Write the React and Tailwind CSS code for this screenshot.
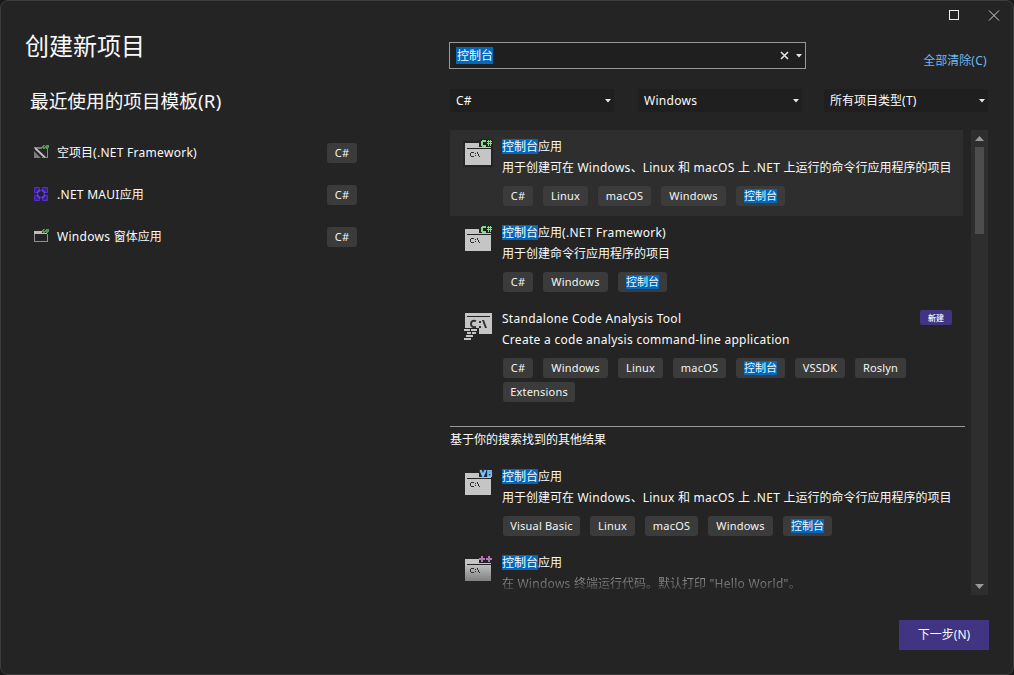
import React from "react";

const Mark = ({ children }) => <span className="bg-[#0069be] inline-block">{children}</span>;

// Latin runs are spaced slightly wider than the ideographs around them.
const Mixed = ({ text }) =>
  text.split(/([\x20-\x7e]+)/).map((part, i) =>
    i % 2 ? <span key={i} className="tracking-[0.28px]">{part}</span> : part
  );

function ConsoleIcon({ badge, fade }) {
  return (
    <svg width="30" height="30" viewBox="0 0 30 30" className="shrink-0 overflow-visible" shapeRendering="crispEdges">
      <defs>
        <linearGradient id="consoleFade" x1="0" y1="0" x2="0" y2="1">
          <stop offset="0.2" stopColor="#c5c5c5" />
          <stop offset="1" stopColor="#808080" />
        </linearGradient>
      </defs>
      <path d="M-1 3H15V1H29V11H29V29H-1Z" fill="#242424" />
      <path d="M1 5H15V9H27V27H1Z" fill={fade ? "url(#consoleFade)" : "#c5c5c5"} />
      <path d="M3 10h24v1H3z" fill="#242424" />
      <path d="M7 14h3v1H7zM6 15h1v3H6zM7 18h3v1H7zM11 15h1v1h-1zM11 17h1v1h-1zM13 14h1v2h-1zM14 16h1v2h-1zM15 18h1v1h-1z" fill="#303030" />
      {badge === "cs" && (
        <path
          d="M18 2h4v2h-3v3h3v2h-4v-1h-1v-5h1zM24 2h1v1h1v-1h1v1h1v1h-1v1h1v1h-1v2h-1v-2h-1v2h-1v-2h-1v-1h1v-1h-1v-1h1zM25 4v1h1v-1z"
          fill="#8bd68b"
        />
      )}
      {badge === "vb" && (
        <g fill="none" stroke="#75bfff" shapeRendering="auto">
          <path d="M16.500 2L19 8L21.500 2" strokeWidth="2.200" />
          <path d="M24 2.800H27V5H24M24 5.200H27.200V8.100H24V2" strokeWidth="1.700" />
        </g>
      )}
      {badge === "cpp" && (
        <path d="M15 4h2v-2h2v2h2v2h-2v2h-2v-2h-2zM22 4h2v-2h2v2h2v2h-2v2h-2v-2h-2z" fill="#b873b8" />
      )}
    </svg>
  );
}

function AnalysisIcon() {
  return (
    <svg width="30" height="32" viewBox="0 0 30 32" className="shrink-0" shapeRendering="crispEdges">
      <path d="M1 3H28V24H15V18H1Z" fill="#c5c5c5" />
      <path d="M3 6h23v1H3z" fill="#242424" />
      <path d="M12 11.200C9 9.800 7 11.300 7 14S9 17.500 12 17" fill="none" stroke="#303030" strokeWidth="2" shapeRendering="auto" />
      <path d="M15 11h2v2h-2zM15 16h2v2h-2zM18 10h2l3 8h-2z" fill="#303030" shapeRendering="auto" />
      <path d="M0 18h14v6h-3v3h-3v3H0z" fill="#242424" />
      <path d="M0 19h6v2H0zM7 19h6v2H7zM3 22h4v2H3zM8 22h4v2H8zM2 25h7v2H2zM0 28h7v2H0z" fill="#c5c5c5" />
    </svg>
  );
}

function RecentIcon({ kind }) {
  if (kind === "maui")
    return (
      <svg width="16" height="16" viewBox="0 0 16 16" className="shrink-0">
        <path d="M1.500 1.500h5v5h-5zM9.500 1.500h5v5h-5zM1.500 9.500h5v5h-5zM9.500 9.500h5v5h-5z" fill="#3a2196" stroke="#512bd4" />
        <path d="M6.500 4.500h3L11.500 6.500v3L9.500 11.500h-3L4.500 9.500v-3z" fill="#241d40" stroke="#6a49e8" strokeWidth="1.400" />
        <path d="M8 1v5M8 10v5M0 8h5M11 8h5" stroke="#2a2340" />
      </svg>
    );
  return (
    <svg width="16" height="16" viewBox="0 0 16 16" className="shrink-0" shapeRendering="crispEdges">
      {kind === "empty" ? (
        <>
          <path d="M1 3h8v2H5L1 4zM1 7v7h7z" fill="#7c7c7c" shapeRendering="auto" />
          <path d="M2 4L12 13.500" stroke="#c0c0c0" strokeWidth="1.800" shapeRendering="auto" />
          <path d="M14.500 5v9M9 13.500h1M12 13.500h2" stroke="#8a8a8a" />
        </>
      ) : (
        <>
          <path d="M1.500 4v9.500h13V6" fill="none" stroke="#8f8f8f" />
          <path d="M1 3h8v2h5v1H1z" fill="#bdbdbd" />
        </>
      )}
      <path d="M10 1h2v1h-1v1h1v2h-2v-1h-1v-2h1zM13 1h3v3h-1v1h-2v-1h-1v-2h1z" fill="#4f9a4f" />
    </svg>
  );
}

const recent = [
  { kind: "empty", text: "空项目(.NET Framework)" },
  { kind: "maui", text: ".NET MAUI应用" },
  { kind: "forms", text: "Windows 窗体应用" },
];

const TAG = {
  "C#": "w-[30px]",
  Linux: "w-[45px]",
  macOS: "w-[53px]",
  Windows: "w-[65px]",
  控制台: "w-[49px]",
  VSSDK: "w-[50px]",
  Roslyn: "w-[51px]",
  Extensions: "w-[72px]",
  "Visual Basic": "w-[77px]",
};

const Tag = ({ name }) => (
  <span className={`${TAG[name]} flex h-5 items-center justify-center rounded-[3px] bg-[#3b3b3b] text-[11px] leading-[14px] text-[#f5f5f5]`}>
    {name === "控制台" ? <Mark>{name}</Mark> : <span className="tracking-[0.2px]">{name}</span>}
  </span>
);

function Item({ icon, title, desc, tags, selected, isNew, tall, descClass = "" }) {
  return (
    <div className={`flex w-[513px] shrink-0 pl-[14px] pt-2 ${tall ? "h-[110px]" : "h-[86px]"} ${selected ? "bg-[#2e2e2e]" : ""}`}>
      {icon}
      <div className="ml-2 mt-px flex min-w-0 flex-1 flex-col">
        <div className="flex h-[15px] items-center justify-between pr-[11px]">
          <span className="whitespace-pre text-[12px] leading-[15px]">{title}</span>
          {isNew && <span className="-mt-[2px] flex h-[15px] w-8 items-center justify-center rounded-[2px] bg-[#413482] text-[8px] font-medium leading-[10px]">新建</span>}
        </div>
        <div className={`mt-[6px] h-[15px] whitespace-pre text-[12px] leading-[15px] ${descClass}`}><Mixed text={desc} /></div>
        {tags && (
          <div className="ml-px mt-[11px] flex w-[440px] flex-wrap gap-x-[10px] gap-y-1">
            {tags.map((t) => <Tag key={t} name={t} />)}
          </div>
        )}
      </div>
    </div>
  );
}

const Caret = () => (
  <svg width="6" height="4" viewBox="0 0 6 4"><path d="M0 0h6L3 3.500z" fill="#e6e6e6" /></svg>
);

const Combo = ({ label }) => (
  <div className="flex h-[23px] w-[164px] items-center justify-between bg-[#1f1f1f] pl-[6px] pr-[3px]">
    <span className="text-[12px] leading-[15px]"><Mixed text={label} /></span>
    <Caret />
  </div>
);

const longDesc = "用于创建可在 Windows、Linux 和 macOS 上 .NET 上运行的命令行应用程序的项目";

export default function App() {
  return (
    <div className="h-[675px] w-[1014px] overflow-hidden bg-[#1a1a1a] font-['Noto_Sans','Noto_Sans_CJK_SC',sans-serif] text-[#fafafa]">
      <div className="flex h-full w-full rounded-lg border border-[#3d3d3d] bg-[#242424]">
        <div className="w-[448px] shrink-0">
          <h1 className="ml-[24px] mt-[29px] text-[24px] leading-8">创建新项目</h1>
          <h2 className="ml-[29px] mt-[25px] text-[18.67px] leading-7">最近使用的项目模板<span className="tracking-[0.3px]">(R)</span></h2>
          <div className="ml-[32px] mt-[17px] flex w-[324px] flex-col">
            {recent.map((r) => (
              <div key={r.kind} className="flex h-[42px] items-center">
                <span className="flex flex-1 items-center pb-[2px]">
                  <RecentIcon kind={r.kind} />
                  <span className="ml-2 text-[12px] leading-[15px]"><Mixed text={r.text} /></span>
                </span>
                <Tag name="C#" />
              </div>
            ))}
          </div>
        </div>

        <div className="flex w-[540px] flex-col">
          <div className="flex h-[41px] items-start justify-end gap-[28px] pt-[9px]">
            <svg width="11" height="11" viewBox="0 0 11 11"><rect x=".5" y=".5" width="9" height="9" fill="none" stroke="#f0f0f0" /></svg>
            <svg width="12" height="11" viewBox="0 0 12 11" className="-mr-[11px]"><path d="M1 .500l10 10M11 .500l-10 10" stroke="#d0d0d0" /></svg>
          </div>
          <div className="flex items-start justify-between">
            <div className="flex h-[27px] w-[357px] items-center border border-[#999] bg-[#1f1f1f] pl-[6px] pr-[3px]">
              <span className="flex h-[17px] items-center bg-[#0069be] pl-px text-[12px] leading-[15px]">控制台</span>
              <svg width="9" height="9" viewBox="0 0 9 9" className="ml-auto mr-[7px]"><path d="M1 1l7 7M8 1l-7 7" stroke="#e0e0e0" strokeWidth="1.600" /></svg>
              <Caret />
            </div>
            <span className="mr-[2px] mt-[11px] text-[12px] leading-[15px] text-[#71b7ec]">全部清除<span className="tracking-[0.3px]">(C)</span></span>
          </div>
          <div className="ml-px mt-5 flex w-[538px]">
            <Combo label="C#" />
            <div className="ml-6 mr-[22px]"><Combo label="Windows" /></div>
            <Combo label="所有项目类型(T)" />
          </div>
          <div className="ml-px mt-[18px] flex h-[465px] w-[538px] justify-between">
            <div className="flex h-full w-[515px] flex-col overflow-hidden">
              <Item selected icon={<ConsoleIcon badge="cs" />} title={<><Mark>控制台</Mark>应用</>} desc={longDesc} tags={["C#", "Linux", "macOS", "Windows", "控制台"]} />
              <Item icon={<ConsoleIcon badge="cs" />} title={<><Mark>控制台</Mark><Mixed text="应用(.NET Framework)" /></>} desc="用于创建命令行应用程序的项目" tags={["C#", "Windows", "控制台"]} />
              <Item tall isNew icon={<AnalysisIcon />} title={<Mixed text="Standalone Code Analysis Tool" />} desc="Create a code analysis command-line application" tags={["C#", "Windows", "Linux", "macOS", "控制台", "VSSDK", "Roslyn", "Extensions"]} />
              <div className="mt-[14px] h-[34px] shrink-0 border-t border-[#999] pt-[5px] text-[12px] leading-[15px]">基于你的搜索找到的其他结果</div>
              <Item icon={<ConsoleIcon badge="vb" />} title={<><Mark>控制台</Mark>应用</>} desc={longDesc} tags={["Visual Basic", "Linux", "macOS", "Windows", "控制台"]} />
              <Item icon={<ConsoleIcon badge="cpp" fade />} title={<><Mark>控制台</Mark>应用</>} desc={'在 Windows 终端运行代码。默认打印 "Hello World"。'} descClass="bg-linear-to-b from-[#a0a0a0] to-[#4a4a4a] bg-clip-text text-transparent" />
            </div>
            <div className="flex h-full w-[17px] flex-col items-center bg-[#2e2e2e] pb-[6px] pt-[6px]">
              <svg width="9" height="5" viewBox="0 0 9 5"><path d="M0 5h9L4.500 0z" fill="#999" /></svg>
              <div className="mt-[6px] h-[87px] w-[9px] bg-[#4d4d4d]" />
              <svg width="9" height="5" viewBox="0 0 9 5" className="mt-auto"><path d="M0 0h9L4.500 5z" fill="#999" /></svg>
            </div>
          </div>
          <div className="mt-[25px] flex justify-end">
            <button className="h-[30px] w-[90px] bg-[#413482] pb-[2px] text-[12px] leading-[15px]">下一步(N)</button>
          </div>
        </div>
      </div>
    </div>
  );
}
